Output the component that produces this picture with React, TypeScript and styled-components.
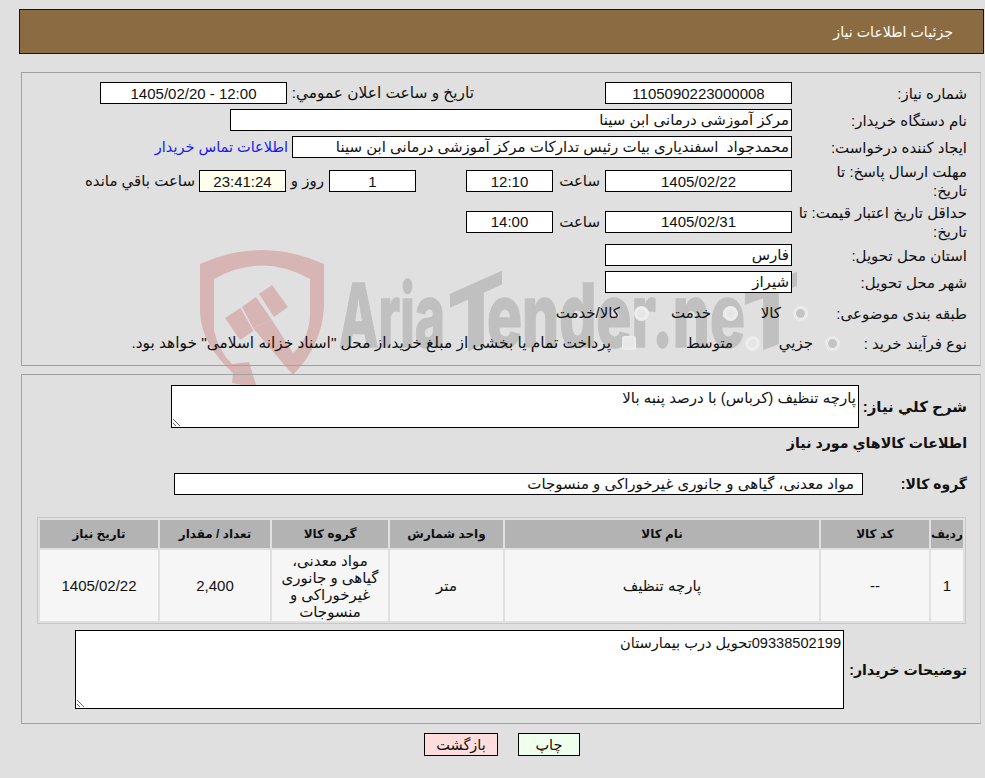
import React from "react";
import styled, { createGlobalStyle } from "styled-components";

const FONT = `"Liberation Sans", "DejaVu Sans", sans-serif`;

const Global = createGlobalStyle`
  html, body { margin: 0; padding: 0; background: #e0e0e0; }
  body { font-family: ${FONT}; font-size: 15px; color: #111; }
  * { box-sizing: border-box; }
`;

const Page = styled.div`
  position: relative;
  width: 985px;
  height: 778px;
  overflow: hidden;
  direction: rtl;
  padding: 9px 1px 0 19px;
`;

const Watermark = styled.svg`
  position: absolute;
  left: 0;
  top: 0;
  width: 985px;
  height: 778px;
  z-index: 0;
  direction: ltr;
`;

const Content = styled.div`
  position: relative;
  z-index: 1;
  display: flex;
  flex-direction: column;
`;

const Header = styled.div`
  height: 45px;
  background: #8b6c42;
  border: 1px solid #1c1408;
  color: #fff;
  font-size: 14.2px;
  display: flex;
  align-items: center;
  padding-right: 30px;
`;

const Panel = styled.section<{ $top: number; $mt: number; $h: number }>`
  margin: ${(p) => p.$mt}px 3px 0 2px;
  height: ${(p) => p.$h}px;
  border: 1px solid #a0a0a0;
  border-right-color: #c4c4c4;
  padding: ${(p) => p.$top}px 13px 0 0;
  display: flex;
  flex-direction: column;
  gap: 5px;
`;

const Row = styled.div<{ $h?: number; $mt?: number }>`
  display: flex;
  align-items: center;
  height: ${(p) => p.$h ?? 22}px;
  margin-top: ${(p) => p.$mt ?? 0}px;
  flex: none;
`;

const Label = styled.label`
  width: 175px;
  flex: none;
  line-height: 19px;
  text-align: right;
  white-space: nowrap;
`;

const Field = styled.div<{ $w: number; $start?: boolean; $bg?: string; $mr?: number; $pad?: number }>`
  width: ${(p) => p.$w}px;
  height: 22px;
  flex: none;
  margin-right: ${(p) => p.$mr ?? 0}px;
  background: ${(p) => p.$bg ?? "#fff"};
  border: 1px solid #000;
  display: flex;
  align-items: center;
  justify-content: ${(p) => (p.$start ? "flex-start" : "center")};
  padding: 0 ${(p) => p.$pad ?? (p.$start ? 2 : 0)}px;
  white-space: pre;
`;

const Inline = styled.span<{ $w?: number; $mr?: number; $size?: number }>`
  flex: none;
  ${(p) => (p.$w ? `width: ${p.$w}px;` : "")}
  ${(p) => (p.$size ? `font-size: ${p.$size}px;` : "")}
  margin-right: ${(p) => p.$mr ?? 0}px;
  white-space: nowrap;
`;

const Link = styled.a`
  color: #1a1aee;
  font-size: 14.5px;
  text-decoration: none;
  margin-right: 4px;
  white-space: nowrap;
  flex: none;
`;

const Radio = styled.span<{ $on?: boolean; $x: number }>`
  flex: none;
  width: 15px;
  height: 15px;
  margin-right: ${(p) => p.$x}px;
  border-radius: 50%;
  border: 2px solid #ececec;
  background: ${(p) => (p.$on ? "#c4c4c4" : "#e6e6e6")};
  box-shadow: inset 0 0 0 1px #f2f2f2;
`;

const Check = styled.span<{ $x: number }>`
  flex: none;
  width: 14px;
  height: 14px;
  margin-right: ${(p) => p.$x}px;
  border-radius: 2px;
  border: 2px solid #ececec;
  background: #e8e8e8;
`;

const BoldLabel = styled.label<{ $w: number; $size: number }>`
  width: ${(p) => p.$w}px;
  flex: none;
  font-weight: 700;
  font-size: ${(p) => p.$size}px;
  white-space: nowrap;
`;

const Heading = styled.h3`
  margin: 0;
  font-size: 14.2px;
  font-weight: 700;
  height: 20px;
  line-height: 20px;
  flex: none;
`;

const Area = styled.textarea<{ $w: number; $h: number; $size: number }>`
  width: ${(p) => p.$w}px;
  height: ${(p) => p.$h}px;
  flex: none;
  display: block;
  margin: 0;
  padding: 3px 2px 2px;
  border: 1px solid #000;
  border-radius: 0;
  background: #fff;
  color: #111;
  font: ${(p) => p.$size}px ${FONT};
  outline: none;
`;

const Table = styled.table`
  width: 929px;
  flex: none;
  margin: 17px 1px 1px 0;
  table-layout: fixed;
  border-collapse: separate;
  border-spacing: 2px;
  border: 1px solid #c8c8c8;
  text-align: center;
`;

const Th = styled.th<{ $w?: number }>`
  ${(p) => (p.$w ? `width: ${p.$w}px;` : "")}
  height: 28px;
  padding: 0;
  background: #b3b3b3;
  font-size: 12px;
  font-weight: 700;
`;

const Td = styled.td`
  height: 71px;
  padding: 0 2px;
  background: #f6f6f6;
  line-height: 17px;
  font-size: 15px;
`;

const Actions = styled.div`
  display: flex;
  justify-content: center;
  gap: 20px;
  margin-top: 9px;
  padding-left: 1px;
  direction: ltr;
`;

const Button = styled.button<{ $bg: string; $w: number }>`
  width: ${(p) => p.$w}px;
  height: 23px;
  padding: 0;
  border: 1px solid #000;
  background: ${(p) => p.$bg};
  color: #111;
  font: 14.5px ${FONT};
`;

const Shield = () => (
  <g fill="#d8b5b5">
    <path d="M200 264 Q262 236 324 264 L324 307 Q322 345 293 375 L253 328 L272 320 L293 353 Q310 338 310 313 L310 279 Q262 252 214 279 L214 330 Q218 350 232 364 L249 362 L257 388 L232 383 L233 373 Q202 345 200 313 Z" />
    <path d="M225 318 L240.5 308 L253.5 331 L240 340 Z" />
    <path d="M242 307 L256 297 L272 320 L253 328 Z" />
    <path d="M259 294 L272 285 L288 307 L274 317 Z" />
  </g>
);

const Wordmark = () => (
  <g
    fill="#c0c0c0"
    stroke="#c0c0c0"
    strokeWidth="1.5"
    strokeLinejoin="round"
    fontFamily="Inter, 'Liberation Sans', sans-serif"
    fontWeight="800"
    fontSize="88"
  >
    <text x="339" y="347" textLength="106" lengthAdjust="spacingAndGlyphs">Aria</text>
    <text x="448" y="347" textLength="56" lengthAdjust="spacingAndGlyphs" transform="translate(476 320) skewY(-24) translate(-476 -320)">T</text>
    <text x="487" y="347" textLength="258" lengthAdjust="spacingAndGlyphs">ender.ne</text>
    <text x="743" y="347" textLength="56" lengthAdjust="spacingAndGlyphs" transform="translate(769 320) skewY(-20) translate(-769 -320)">T</text>
  </g>
);

export default function App() {
  return (
    <>
      <Global />
      <Page>
        <Watermark viewBox="0 0 985 778" aria-hidden="true">
          <Shield />
          <Wordmark />
        </Watermark>
        <Content>
          <Header>جزئیات اطلاعات نیاز</Header>

          <Panel $mt={18} $h={294} $top={9}>
            <Row>
              <Label>شماره نیاز:</Label>
              <Field $w={187}>1105090223000008</Field>
              <Inline $w={187} $mr={131} $size={15.4}>تاریخ و ساعت اعلان عمومي:</Inline>
              <Field $w={187}>12:00 - 1405/02/20</Field>
            </Row>
            <Row>
              <Label>نام دستگاه خریدار:</Label>
              <Field $w={562} $start>مرکز آموزشی درمانی ابن سینا</Field>
            </Row>
            <Row>
              <Label>ایجاد کننده درخواست:</Label>
              <Field $w={500} $start>محمدجواد  اسفندیاری بیات رئیس تدارکات مرکز آموزشی درمانی ابن سینا</Field>
              <Link href="#">اطلاعات تماس خریدار</Link>
            </Row>
            <Row $h={36}>
              <Label>مهلت ارسال پاسخ: تا<br />تاریخ:</Label>
              <Field $w={187}>1405/02/22</Field>
              <Inline $w={47} $mr={5}>ساعت</Inline>
              <Field $w={87}>12:10</Field>
              <Field $w={87} $mr={50}>1</Field>
              <Inline $w={38} $mr={5}>روز و</Inline>
              <Field $w={87} $bg="#ffffee">23:41:24</Field>
              <Inline $mr={4}>ساعت باقي مانده</Inline>
            </Row>
            <Row $h={35}>
              <Label>حداقل تاریخ اعتبار قیمت: تا<br />تاریخ:</Label>
              <Field $w={187}>1405/02/31</Field>
              <Inline $w={47} $mr={5}>ساعت</Inline>
              <Field $w={87}>14:00</Field>
            </Row>
            <Row>
              <Label>استان محل تحویل:</Label>
              <Field $w={187} $start>فارس</Field>
            </Row>
            <Row>
              <Label>شهر محل تحویل:</Label>
              <Field $w={187} $start>شیراز</Field>
            </Row>
            <Row $h={30}>
              <Label>طبقه بندی موضوعی:</Label>
              <Radio $on $x={-16} />
              <Inline $w={27} $mr={12}>کالا</Inline>
              <Radio $x={16} />
              <Inline $w={49} $mr={12}>خدمت</Inline>
              <Radio $x={13} />
              <Inline $mr={14}>کالا/خدمت</Inline>
            </Row>
            <Row $h={20}>
              <Label>نوع فرآیند خرید :</Label>
              <Radio $on $x={-48} />
              <Inline $w={42} $mr={12}>جزيي</Inline>
              <Radio $x={11} />
              <Inline $w={52} $mr={12}>متوسط</Inline>
              <Check $x={45} />
              <Inline $mr={11} $size={15.4}>پرداخت تمام یا بخشی از مبلغ خرید،از محل "اسناد خزانه اسلامی" خواهد بود.</Inline>
            </Row>
          </Panel>

          <Panel $mt={8} $h={350} $top={10}>
            <Row $h={43}>
              <BoldLabel $w={108} $size={15}>شرح كلي نياز:</BoldLabel>
              <Area $w={688} $h={43} $size={15} readOnly defaultValue="پارچه تنظیف (کرباس) با درصد پنبه بالا" />
            </Row>
            <Heading>اطلاعات كالاهاي مورد نياز</Heading>
            <Row $mt={15}>
              <BoldLabel $w={104} $size={14}>گروه کالا:</BoldLabel>
              <Field $w={689} $start $pad={8}>مواد معدنی، گیاهی و جانوری غیرخوراکی و منسوجات</Field>
            </Row>
            <Table>
              <thead>
                <tr>
                  <Th $w={32}>ردیف</Th>
                  <Th $w={108}>کد کالا</Th>
                  <Th $w={314}>نام کالا</Th>
                  <Th $w={113}>واحد شمارش</Th>
                  <Th $w={116}>گروه کالا</Th>
                  <Th $w={110}>تعداد / مقدار</Th>
                  <Th>تاریخ نیاز</Th>
                </tr>
              </thead>
              <tbody>
                <tr>
                  <Td>1</Td>
                  <Td>--</Td>
                  <Td>پارچه تنظیف</Td>
                  <Td>متر</Td>
                  <Td>مواد معدنی، گیاهی و جانوری غیرخوراکی و منسوجات</Td>
                  <Td>2,400</Td>
                  <Td>1405/02/22</Td>
                </tr>
              </tbody>
            </Table>
            <Row $h={79}>
              <BoldLabel $w={123} $size={14.2}>توضیحات خریدار:</BoldLabel>
              <Area $w={769} $h={79} $size={14.6} readOnly defaultValue="09338502199تحویل درب بیمارستان" />
            </Row>
          </Panel>

          <Actions>
            <Button $bg="#ffdddd" $w={74}>بازگشت</Button>
            <Button $bg="#eeffee" $w={62}>چاپ</Button>
          </Actions>
        </Content>
      </Page>
    </>
  );
}
